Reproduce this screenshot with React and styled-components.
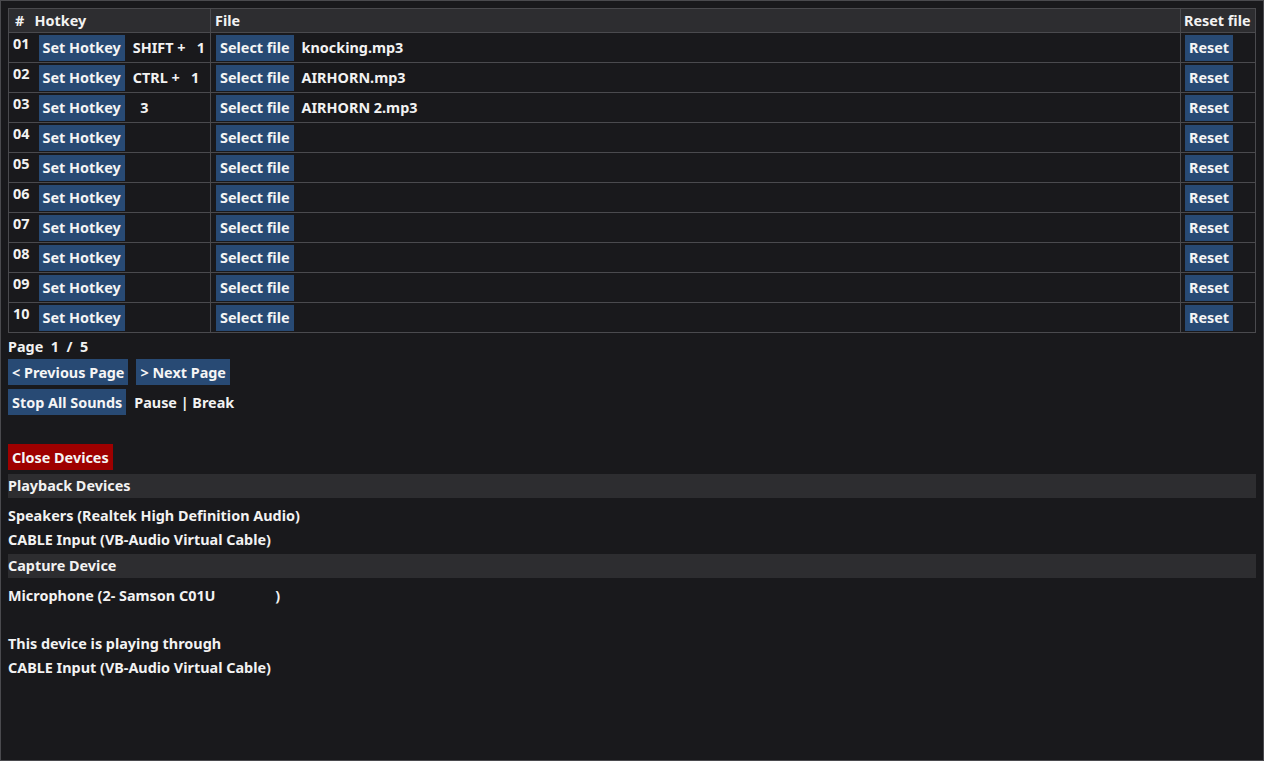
import React from "react";
import styled, { createGlobalStyle } from "styled-components";

const Global = createGlobalStyle`
  html, body {
    margin: 0;
    padding: 0;
    background: #19191c;
  }
  body {
    font-family: "Noto Sans", "Open Sans", sans-serif;
    font-weight: 700;
    font-size: 14.4px;
    color: #f2f2f2;
  }
`;

const Frame = styled.div`
  box-sizing: border-box;
  min-height: 100vh;
  border: 1px solid #4a4a4e;
  padding: 7px;
  background: #19191c;
`;

const Table = styled.table`
  width: 100%;
  border-collapse: collapse;
  border: 1px solid #4a4a4e;
  table-layout: fixed;
`;

const Th = styled.th`
  background: #2d2d30;
  text-align: ${(p) => p.$align || "left"};
  font-weight: 700;
  height: 23px;
  padding: 0 ${(p) => p.$pad ?? 4}px;
  border-right: ${(p) => (p.$noRight ? "none" : "1px solid #4a4a4e")};
  border-bottom: 1px solid #4a4a4e;
  white-space: pre;
  line-height: 23px;
  overflow: hidden;
`;

const Td = styled.td`
  height: 29px;
  padding: 0 0 0 ${(p) => p.$pad ?? 4}px;
  border-right: ${(p) => (p.$noRight ? "none" : "1px solid #4a4a4e")};
  border-bottom: 1px solid #4a4a4e;
  vertical-align: ${(p) => p.$valign || "middle"};
  white-space: pre;
`;

const Num = styled.div`
  padding-top: 1px;
  line-height: 20px;
`;

const Cell = styled.div`
  display: flex;
  align-items: center;
  gap: 8px;
`;

const Btn = styled.button`
  font: inherit;
  font-weight: 700;
  color: #f5f5f5;
  background: ${(p) => (p.$danger ? "#9e0000" : "#284a74")};
  border: none;
  border-radius: 0;
  height: 26px;
  padding: 0 4px;
  cursor: pointer;
  white-space: pre;
`;

const Below = styled.div`
  display: flex;
  flex-direction: column;
  align-items: flex-start;
  padding-top: 2px;
`;

const Line = styled.div`
  line-height: 24px;
  white-space: pre;
`;

const BtnRow = styled.div`
  display: flex;
  align-items: center;
  gap: 8px;
  margin-bottom: 4px;
`;

const Section = styled.div`
  margin-top: ${(p) => p.$top || 0}px;
  width: 100%;
`;

const SectionBar = styled.div`
  background: #2d2d30;
  height: 24px;
  line-height: 24px;
  margin-bottom: 6px;
`;

const Spacer = styled.div`
  height: ${(p) => p.$h}px;
`;

const rows = [
  { hotkey: "SHIFT +   1", file: "knocking.mp3" },
  { hotkey: "CTRL +   1", file: "AIRHORN.mp3" },
  { hotkey: "  3", file: "AIRHORN 2.mp3" },
  {}, {}, {}, {}, {}, {}, {},
];

export default function App() {
  return (
    <>
      <Global />
      <Frame>
        <Table>
          <colgroup>
            <col style={{ width: 22 }} />
            <col style={{ width: 180 }} />
            <col />
            <col style={{ width: 75 }} />
          </colgroup>
          <thead>
            <tr>
              <Th $noRight $align="center" $pad={0}>#</Th>
              <Th>Hotkey</Th>
              <Th>File</Th>
              <Th $pad={3}>Reset file</Th>
            </tr>
          </thead>
          <tbody>
            {rows.map((r, i) => (
              <tr key={i}>
                <Td $noRight $valign="top" $pad={4}>
                  <Num>{String(i + 1).padStart(2, "0")}</Num>
                </Td>
                <Td $pad={8}>
                  <Cell>
                    <Btn>Set Hotkey</Btn>
                    {r.hotkey && <span>{r.hotkey}</span>}
                  </Cell>
                </Td>
                <Td $pad={5}>
                  <Cell>
                    <Btn>Select file</Btn>
                    {r.file && <span>{r.file}</span>}
                  </Cell>
                </Td>
                <Td $pad={4}>
                  <Btn>Reset</Btn>
                </Td>
              </tr>
            ))}
          </tbody>
        </Table>
        <Below>
          <Line>Page  1  /  5</Line>
          <BtnRow>
            <Btn>{"< Previous Page"}</Btn>
            <Btn>{"> Next Page"}</Btn>
          </BtnRow>
          <BtnRow>
            <Btn>Stop All Sounds</Btn>
            <span>Pause | Break</span>
          </BtnRow>
          <Spacer $h={25} />
          <Btn $danger>Close Devices</Btn>
          <Section $top={4}>
            <SectionBar>Playback Devices</SectionBar>
            <Line>Speakers (Realtek High Definition Audio)</Line>
            <Line>CABLE Input (VB-Audio Virtual Cable)</Line>
          </Section>
          <Section $top={2}>
            <SectionBar>Capture Device</SectionBar>
            <Line>{"Microphone (2- Samson C01U                )"}</Line>
            <Spacer $h={24} />
            <Line>This device is playing through</Line>
            <Line>CABLE Input (VB-Audio Virtual Cable)</Line>
          </Section>
        </Below>
      </Frame>
    </>
  );
}
